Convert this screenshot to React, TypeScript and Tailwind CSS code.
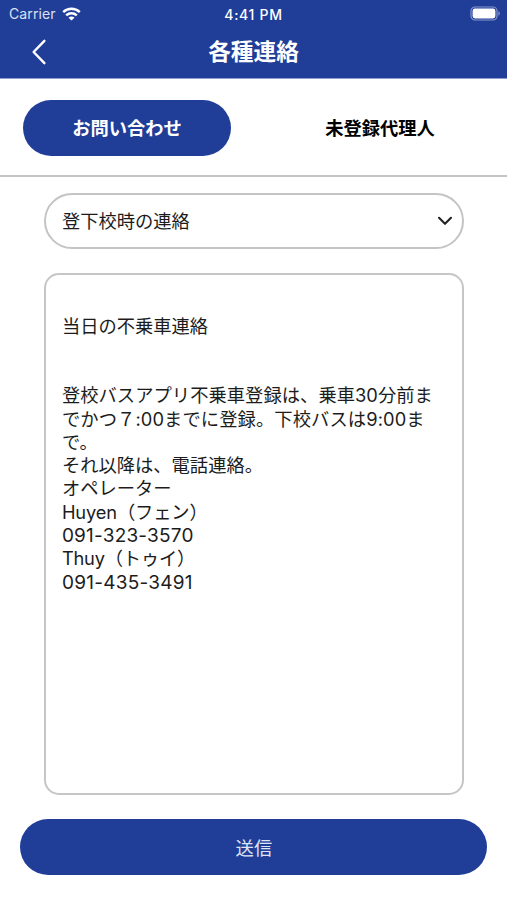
import { useState } from 'react';

const message = [
  { text: '当日の不乗車連絡' },
  { text: '' },
  { text: '' },
  { text: '登校バスアプリ不乗車登録は、乗車30分前ま', style: 'tracking-[0.04px]' },
  { text: 'でかつ７:00までに登録。下校バスは9:00ま', style: 'tracking-[0.1px]' },
  { text: 'で。' },
  { text: 'それ以降は、電話連絡。' },
  { text: 'オペレーター' },
  { text: 'Huyen（フェン）', style: 'tracking-[-0.15px]' },
  { text: '091-323-3570', style: 'text-[19px] tracking-[0.2px]' },
  { text: 'Thuy（トゥイ）', style: 'tracking-[-0.2px]' },
  { text: '091-435-3491', style: 'text-[19px] tracking-[0.25px]' },
];

const tabs = ['お問い合わせ', '未登録代理人'];

function WifiIcon() {
  return (
    <svg width="19" height="14" viewBox="0 0 19 14" fill="none" stroke="currentColor" strokeWidth="2.5">
      <path d="M1.2 5.1C5.9 .7 13.1 .7 17.8 5.1" />
      <path d="M4.2 8.4C7.2 5.6 11.8 5.6 14.8 8.4" />
      <path d="M9.5 13.6 6.5 10.7C8.2 9.2 10.8 9.2 12.5 10.7Z" fill="currentColor" stroke="none" />
    </svg>
  );
}

function BatteryIcon() {
  return (
    <svg width="31" height="15" viewBox="0 0 31 15" fill="none">
      <rect x="1" y="1" width="26" height="13" rx="4" stroke="#8797c9" strokeWidth="1.2" />
      <rect x="2.6" y="2.6" width="22.8" height="9.8" rx="2.4" fill="#fff" />
      <path d="M28.4 5.3C30.3 6 30.3 9 28.4 9.7Z" fill="#8797c9" />
    </svg>
  );
}

function StatusBar() {
  return (
    <div className="grid h-[27px] grid-cols-3 items-center pl-[9px] pr-[6px]">
      <div className="flex items-center gap-[6px] text-[14px] tracking-[0.1px] text-[#dbe1f3]">
        <span>Carrier</span>
        <span className="text-white">
          <WifiIcon />
        </span>
      </div>
      <div className="pt-px pr-[3px] text-center text-[14px] font-medium tracking-[0.7px]">4:41 PM</div>
      <div className="flex justify-end">
        <BatteryIcon />
      </div>
    </div>
  );
}

export default function App() {
  const [active, setActive] = useState(0);

  return (
    <div className="flex h-[900px] w-[507px] flex-col overflow-hidden bg-white font-[Inter,'Noto_Sans_CJK_JP',sans-serif] text-[18.3px] text-[#1c1c1c]">
      <header className="h-[79px] shrink-0 border-b border-[#8c9ccf] bg-[#203e98] text-white">
        <StatusBar />
        <div className="grid h-[50px] grid-cols-[1fr_auto_1fr] items-center">
          <button className="ml-[31px] w-4" aria-label="戻る">
            <svg width="16" height="26" viewBox="0 0 16 26" fill="none" stroke="currentColor" strokeWidth="2.4" strokeLinecap="round" strokeLinejoin="round">
              <path d="M13.4 1.8 2.6 13 13.4 24.2" />
            </svg>
          </button>
          <h1 className="text-[22.7px] leading-[50px] font-bold">各種連絡</h1>
        </div>
      </header>

      <nav className="flex h-[98px] shrink-0 items-center justify-between border-b-2 border-[#c4c4c4] px-[23px] pt-[2px]">
        {tabs.map((label, i) => (
          <button
            key={label}
            onClick={() => setActive(i)}
            className={`h-[56px] w-[208px] rounded-full pt-px font-bold ${
              i === active ? 'bg-[#203e98] text-white' : 'text-black'
            }`}
          >
            {label}
          </button>
        ))}
      </nav>

      <main className="flex flex-1 flex-col pt-4 pr-[43px] pl-[43.5px]">
        <button className="flex h-[56px] items-center justify-between rounded-full border-2 border-[#c4c4c4] pr-[9px] pl-[16.4px]">
          <span className="pt-[2px]">登下校時の連絡</span>
          <svg width="16" height="10" viewBox="0 0 16 10" fill="none" stroke="#222" strokeWidth="2.1" strokeLinecap="round" strokeLinejoin="round">
            <path d="M2 1.8 8 7.8 14 1.8" />
          </svg>
        </button>

        <div className="mt-6 h-[522px] rounded-[15px] border-2 border-[#c6c6c6] px-[16.4px] pt-[39.6px]">
          {message.map((line, i) => (
            <p key={i} className={`h-[23.27px] leading-[23.27px] whitespace-nowrap ${line.style ?? ''}`}>
              {line.text}
            </p>
          ))}
        </div>
      </main>

      <footer className="pr-[19.6px] pb-[24.6px] pl-[20.4px]">
        <button className="h-[56px] w-full rounded-full bg-[#203e98] pt-[2px] text-[#dfe4f4]">送信</button>
      </footer>
    </div>
  );
}
